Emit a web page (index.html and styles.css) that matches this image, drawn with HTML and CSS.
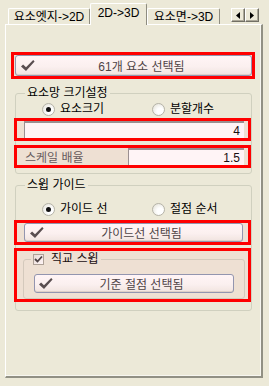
FILE: index.html
```html
<!DOCTYPE html>
<html lang="ko">
<head>
    <meta charset="UTF-8">
    <title>2D->3D</title>
    <link rel="stylesheet" href="styles.css">
</head>
<body>
    <div class="tabs">
        <div class="tab tab-edge">요소엣지-&gt;2D</div>
        <div class="tab tab-active">2D-&gt;3D</div>
        <div class="tab tab-face">요소면-&gt;3D</div>
        <div class="scroll">
            <span class="arrow"><svg width="4" height="7" viewBox="0 0 4 7"><polygon points="4,0 4,7 0,3.5" fill="#000"/></svg></span>
            <span class="arrow"><svg width="4" height="7" viewBox="0 0 4 7"><polygon points="0,0 0,7 4,3.5" fill="#000"/></svg></span>
        </div>
    </div>

    <div class="panel">
        <div class="mark mark-top">
            <button class="btn btn-top">
                <svg class="tick" width="14" height="12" viewBox="0 0 14 12"><path d="M0 6.4 L2.1 4.4 L5 7.2 L12.2 0 L13.6 1.4 L5 11 Z" fill="#474747"/></svg>
                <span class="btn-text">61개 요소 선택됨</span>
            </button>
        </div>

        <fieldset class="group group-size">
            <legend>요소망 크기설정</legend>
            <div class="radios">
                <label class="radio"><span class="dot dot-on"></span>요소크기</label>
                <label class="radio"><span class="dot"></span>분할개수</label>
            </div>
            <div class="mark mark-field">
                <div class="field field-long">4</div>
            </div>
            <div class="mark mark-field mark-scale">
                <span class="field-label">스케일 배율</span>
                <div class="field field-short">1.5</div>
            </div>
        </fieldset>

        <fieldset class="group group-sweep">
            <legend>스윕 가이드</legend>
            <div class="radios">
                <label class="radio"><span class="dot dot-on"></span>가이드 선</label>
                <label class="radio"><span class="dot"></span>절점 순서</label>
            </div>
            <div class="mark mark-guide">
                <button class="btn btn-guide">
                    <svg class="tick" width="14" height="12" viewBox="0 0 14 12"><path d="M0 6.4 L2.1 4.4 L5 7.2 L12.2 0 L13.6 1.4 L5 11 Z" fill="#474747"/></svg>
                    <span class="btn-text">가이드선 선택됨</span>
                </button>
            </div>
            <div class="mark mark-ortho">
                <fieldset class="subgroup">
                    <legend><span class="check"><svg width="9" height="9" viewBox="0 0 9 9"><path d="M1 4 L3.5 6.5 L8 1.5" stroke="#3a3a3a" stroke-width="1.8" fill="none"/></svg></span>직교 스윕</legend>
                    <button class="btn btn-node">
                        <svg class="tick" width="14" height="12" viewBox="0 0 14 12"><path d="M0 6.4 L2.1 4.4 L5 7.2 L12.2 0 L13.6 1.4 L5 11 Z" fill="#474747"/></svg>
                        <span class="btn-text">기준 절점 선택됨</span>
                    </button>
                </fieldset>
            </div>
        </fieldset>
    </div>
</body>
</html>
```

FILE: styles.css
```css
body {
    margin: 0;
    background-color: #ece9d8;
    font-family: "Liberation Sans", "Noto Sans CJK KR", sans-serif;
    font-size: 12px;
    color: #000;
    width: 269px;
    height: 386px;
    overflow: hidden;
}

/* tab strip */
.tabs {
    display: flex;
    align-items: flex-end;
    height: 24px;
    padding-left: 8px;
}
.tab {
    box-sizing: border-box;
    height: 16px;
    line-height: 17px;
    text-align: center;
    white-space: nowrap;
    border: 1px solid;
    border-color: #fff #8e8c80 transparent #fff;
    border-bottom: 0;
    border-radius: 2px 2px 0 0;
}
.tab-edge {
    width: 82px;
}
.tab-active {
    position: relative;
    z-index: 1;
    width: 57px;
    height: 22px;
    line-height: 18px;
    margin-bottom: -1px;
    background-color: #ece9d8;
}
.tab-face {
    width: 73px;
}
.scroll {
    display: flex;
    align-self: flex-start;
    margin: 8px 10px 0 auto;
}
.arrow {
    box-sizing: border-box;
    width: 14px;
    height: 14px;
    display: flex;
    align-items: center;
    justify-content: center;
    border: 1px solid;
    border-color: #fff #716f64 #716f64 #fff;
    box-shadow: inset -1px -1px 0 #aca899;
}

/* page panel */
.panel {
    box-sizing: border-box;
    width: 258px;
    height: 354px;
    margin-left: 5px;
    padding-top: 27px;
    border-top: 1px solid #fff;
    border-left: 1px solid #fff;
    border-right: 2px solid #919084;
    border-bottom: 2px solid #919084;
    box-shadow: inset -1px -1px 0 #f7f6f0;
}

/* red highlight boxes */
.mark {
    position: relative;
    box-sizing: border-box;
    border: 3px solid #ff0000;
}
.mark::after {
    content: "";
    position: absolute;
    inset: 0;
    background-color: rgba(255, 150, 170, 0.1);
    pointer-events: none;
}
.mark-top {
    width: 244px;
    margin-left: 5px;
}
.mark-field,
.mark-guide,
.mark-ortho {
    width: 237px;
    margin-left: -2px;
}
.mark-field {
    height: 23px;
    margin-top: 2px;
}
.mark-scale {
    display: flex;
    align-items: center;
    margin-top: 4px;
}
.mark-guide {
    margin-top: 4px;
}
.mark-ortho {
    margin-top: 3px;
}

/* buttons */
.btn {
    box-sizing: border-box;
    display: flex;
    align-items: center;
    padding: 0 3px 0 5px;
    border: 1px solid #8796b0;
    border-radius: 3px;
    background: linear-gradient(#ffffff, #fbfbf8 55%, #efede6);
    box-shadow: inset 0 -1px 0 #dcd7cb;
    font: inherit;
    color: #3a3a3a;
}
.btn-text {
    flex: 1;
    text-align: center;
    white-space: nowrap;
}
.tick {
    flex: none;
}
.btn-top {
    width: 237px;
    height: 21px;
    margin-left: 1px;
}
.btn-guide {
    width: 219px;
    height: 19px;
    margin-left: 7px;
}
.btn-node {
    width: 200px;
    height: 19px;
    margin: 8px 0 0 10px;
    padding-left: 4px;
}

/* group boxes */
.group {
    box-sizing: border-box;
    width: 237px;
    min-width: 0;
    margin: 0 0 0 9px;
    padding: 0;
    border: 1px solid #d0d0bf;
    border-radius: 3px;
}
.group legend,
.subgroup legend {
    margin-left: 9px;
    padding: 0 2px;
    line-height: 14px;
    white-space: nowrap;
}
.group-size {
    margin-top: 7px;
    padding-bottom: 5px;
}
.group-sweep {
    margin-top: 4px;
    padding-bottom: 8px;
}
.group-sweep .radios {
    margin-top: 10px;
}

.radios {
    display: grid;
    grid-template-columns: 110px 1fr;
    height: 14px;
    margin-top: 2px;
    padding-left: 26px;
}
.radio {
    display: flex;
    align-items: center;
    gap: 5px;
    line-height: 14px;
    white-space: nowrap;
}
.dot {
    box-sizing: border-box;
    width: 13px;
    height: 13px;
    border-radius: 50%;
    border: 1px solid #b5b3a8;
    background: radial-gradient(circle at 65% 65%, #fff 30%, #e4e2d8 90%);
    display: flex;
    align-items: center;
    justify-content: center;
}
.dot-on::before {
    content: "";
    width: 5px;
    height: 5px;
    border-radius: 50%;
    background-color: #111;
}

/* text fields */
.field {
    box-sizing: border-box;
    height: 17px;
    line-height: 16px;
    padding-right: 4px;
    text-align: right;
    background-color: #fff;
    border-top: 2px solid #8f8f8f;
    border-left: 1px solid #8f8f8f;
    color: #000;
}
.field-long {
    width: 220px;
    margin-left: 7px;
}
.field-label {
    width: 103px;
    padding-left: 8px;
    color: #555;
    white-space: nowrap;
}
.field-short {
    width: 116px;
}

/* nested group with checkbox */
.subgroup {
    box-sizing: border-box;
    width: 222px;
    min-width: 0;
    margin: 1px 0 0 6px;
    padding: 0 0 5px 0;
    border: 1px solid #d0d0bf;
    border-radius: 3px;
}
.subgroup legend {
    margin-left: 7px;
    display: flex;
    align-items: center;
    gap: 7px;
}
.check {
    box-sizing: border-box;
    width: 11px;
    height: 11px;
    border: 1px solid #a5a396;
    background: linear-gradient(135deg, #e6e4da, #fff);
    display: flex;
    align-items: center;
    justify-content: center;
}
```
